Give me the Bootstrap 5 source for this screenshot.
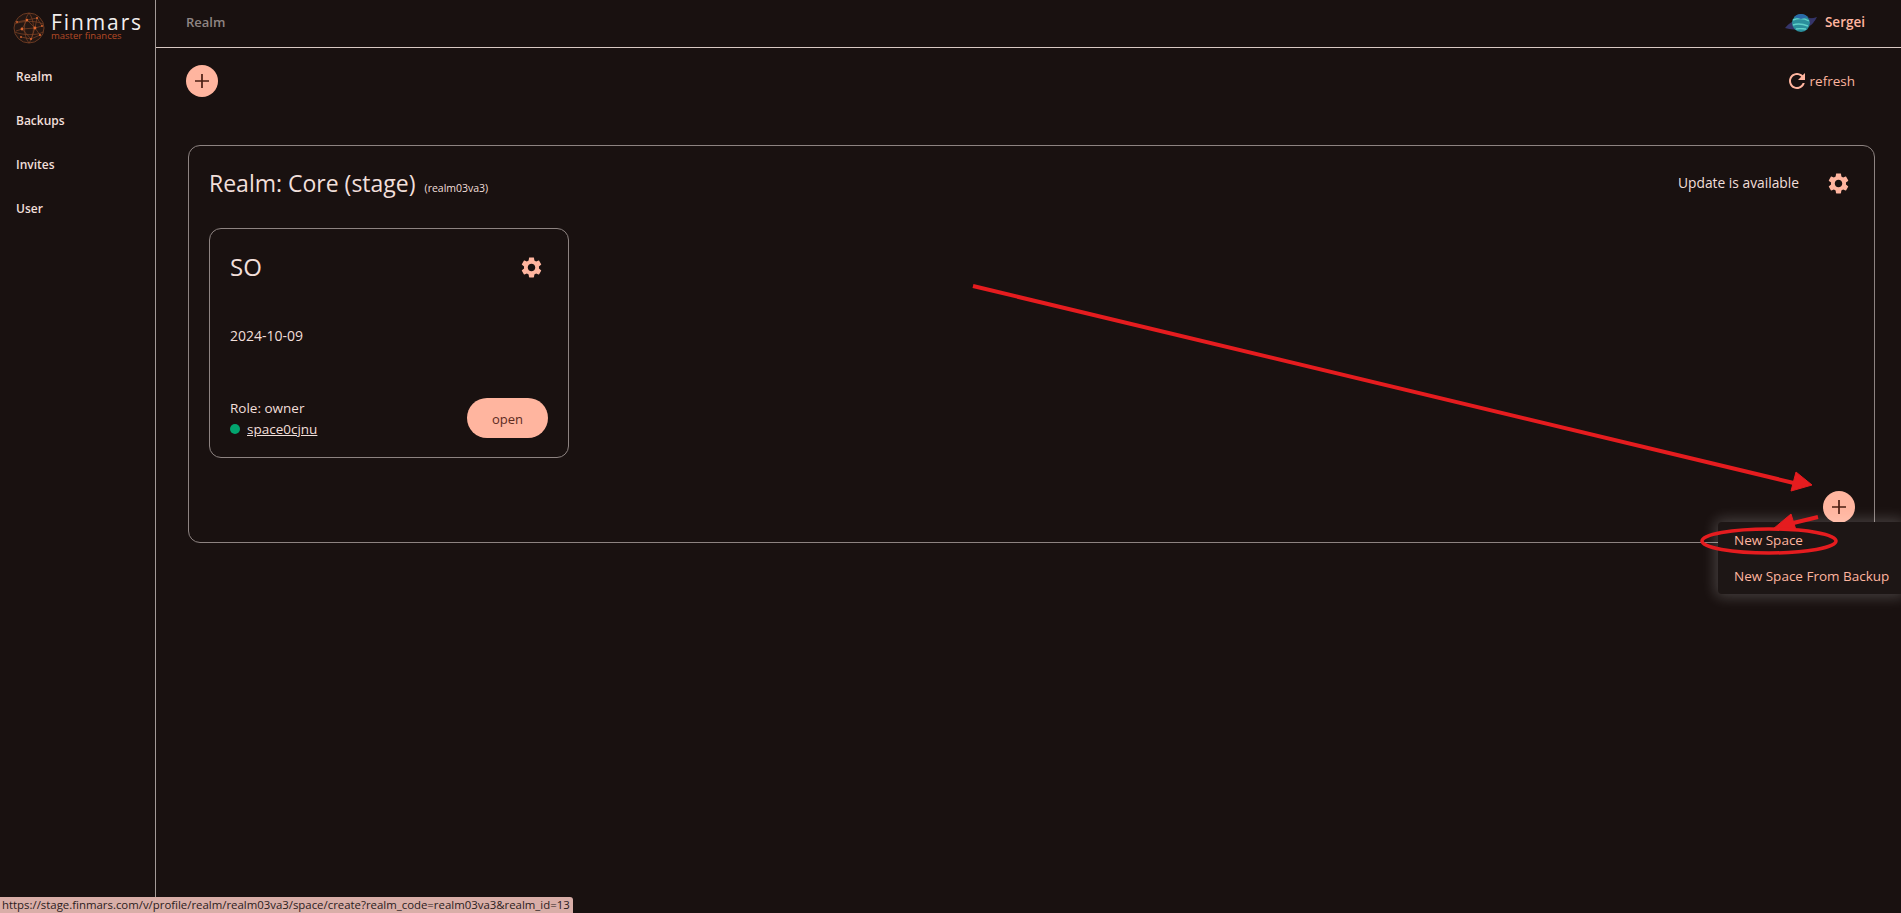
<!DOCTYPE html>
<html lang="en">
<head>
    <meta charset="UTF-8">
    <meta name="viewport" content="width=device-width, initial-scale=1">
    <title>Finmars - Realm</title>
    <link href="https://cdn.jsdelivr.net/npm/bootstrap@5.3.2/dist/css/bootstrap.min.css" rel="stylesheet">
    <style>
        html, body { height: 100%; }
        body {
            background: #191110;
            color: #f1dfda;
            font-family: "Open Sans", "Noto Sans", "Liberation Sans", sans-serif;
            font-size: 13px;
            overflow: hidden;
        }
        /* sidebar */
        .side-bar { width: 156px; height: 913px; border-right: 1px solid #a39a97; }
        .logo-row { height: 47px; padding: 12px 0 0 13px; gap: 6px; }
        .logo-name { font-size: 21px; line-height: 20px; letter-spacing: 1.9px; color: #f2eeed; }
        .logo-sub { font-size: 9.5px; line-height: 8px; color: #b44a26; }
        .side-link { display: block; height: 44px; line-height: 44px; padding-left: 16px; color: #f1dfda; font-size: 12px; font-weight: 600; text-decoration: none; }
        .side-list { padding-top: 8px; }
        /* top bar */
        .top-bar { height: 48px; border-bottom: 1px solid #d8c8c3; padding: 0 36px 2px 30px; }
        .top-title { color: #8f8583; font-weight: 600; font-size: 13px; }
        .user-name { color: #ffb59f; font-weight: 600; font-size: 13.5px; }
        .tool-row { height: 97px; padding: 17px 46px 0 30px; }
        .round-btn {
            width: 32px; height: 32px; padding: 0; border: 0;
            background: #ffb59f;
            display: flex; align-items: center; justify-content: center;
        }
        .refresh-link { color: #ffb59f; font-size: 13.5px; text-decoration: none; margin-top: 6px; gap: 3px; }
        /* realm card */
        .realm-box {
            position: relative;
            margin: 0 26px 0 32px;
            height: 398px;
            background: transparent;
            border: 1px solid #8d8381;
            border-radius: 12px;
            padding: 20px 23px 20px 20px;
            color: #f1dfda;
        }
        .realm-title { font-size: 23px; line-height: 34px; font-weight: 400; margin: 0; }
        .realm-code { font-size: 10.5px; line-height: 1; margin-left: 9px; }
        .update-text { font-size: 13.8px; margin-right: 27px; }
        .space-box {
            width: 360px; height: 230px;
            margin-top: 28px;
            background: transparent;
            border: 1px solid #8d8381;
            border-radius: 12px;
            padding: 20px 20px 19px 20px;
            color: #f1dfda;
        }
        .space-name { font-size: 24px; line-height: 36px; margin: 0; }
        .space-date { margin-top: 42px; font-size: 14px; line-height: 18px; }
        .space-role { font-size: 13.5px; line-height: 18px; margin-bottom: 3px; }
        .status-row { line-height: 18px; }
        .status-dot { width: 10px; height: 10px; background: #02a56f; margin-right: 7px; }
        .space-link { color: #f1dfda; font-size: 13.5px; }
        .open-btn {
            width: 81px; height: 40px; padding: 3px 0 0;
            border: 0; border-radius: 20px;
            background: #ffb59f; color: #5c2b1e; font-size: 13px;
        }
        /* bottom right add button and its menu */
        .add-space { position: absolute; right: 19px; bottom: 19px; }
        .add-menu {
            position: absolute; left: 1718px; top: 522px; width: 183px; height: 72px;
            background: #1d1615;
            border-radius: 4px 0 0 4px;
            box-shadow: 0 0 14px 3px rgba(255, 255, 255, .2);
        }
        .add-menu a { display: block; height: 36px; line-height: 36px; padding-left: 16px; font-size: 13.5px; color: #ffb59f; text-decoration: none; white-space: nowrap; }
        .arrow-layer { position: absolute; left: 0; top: 0; pointer-events: none; }
        .status-tip {
            position: absolute; left: 0; bottom: 0; width: 573px; height: 16px;
            background: #d9aea8; color: #2b2020;
            border-top-right-radius: 3px;
            font-family: "Open Sans", "Liberation Sans", sans-serif;
            font-size: 11.4px; line-height: 16px; padding-left: 2px; white-space: nowrap; overflow: hidden;
        }
    </style>
</head>
<body>

<div class="d-flex">
    <div class="side-bar flex-shrink-0">
        <div class="logo-row d-flex">
            <svg width="32" height="32" viewBox="0 0 32 32" class="flex-shrink-0">
                <circle cx="16" cy="16" r="15" fill="#241713" stroke="#6b3a22" stroke-width="1"/>
                <g stroke="#8f4a28" stroke-width=".6" fill="none">
                    <path d="M2 12 C8 9 22 8 30 12 M2 20 C8 23 24 24 30 20 M16 1 C10 8 10 24 16 31 M16 1 C22 8 22 24 16 31"/>
                    <path d="M4 10 L14 8 L24 6 L29 14 L22 16 L14 8 M14 8 L9 17 L22 16 L18 27 L9 17 L3 19 M22 16 L27 23 L18 27 L8 25 M24 6 L22 16"/>
                </g>
                <g fill="#e0672f">
                    <circle cx="14" cy="8" r="1.2"/><circle cx="9" cy="17" r="1.4"/><circle cx="22" cy="16" r="1.4"/>
                    <circle cx="18" cy="27" r="1"/><circle cx="24" cy="6" r="1"/><circle cx="27" cy="23" r="1"/>
                    <circle cx="4" cy="10" r=".9"/><circle cx="8" cy="25" r=".9"/><circle cx="29" cy="14" r=".9"/>
                </g>
            </svg>
            <div>
                <div class="logo-name">Finmars</div>
                <div class="logo-sub">master finances</div>
            </div>
        </div>
        <div class="side-list">
            <a class="side-link" href="#">Realm</a>
            <a class="side-link" href="#">Backups</a>
            <a class="side-link" href="#">Invites</a>
            <a class="side-link" href="#">User</a>
        </div>
    </div>

    <div class="flex-grow-1">
        <div class="top-bar d-flex align-items-center justify-content-between">
            <span class="top-title">Realm</span>
            <div class="d-flex align-items-center gap-2">
                <svg width="32" height="20" viewBox="0 0 32 20">
                    <path d="M0 15 C4 10 8 8 12 7 L20 5 C25 6 29 5 32 4 C30 8 27 12 22 14 L12 16 C8 17 4 16 0 15 Z" fill="#35356a"/>
                    <circle cx="16" cy="10" r="9" fill="#2b8f9c"/>
                    <path d="M8 7 C13 5 19 5 24 8 M8 12 C13 10 18 11 23 13 M11 16 C15 15 18 16 21 16" stroke="#5fd0c8" stroke-width="1.4" fill="none"/>
                    <path d="M9 4 C13 0 19 0 23 4 L16 6 Z" fill="#2a6aa8"/>
                    <path d="M22 4 C25 6 26 10 24 13 C27 12 29 9 30 6 C27 6 25 5 22 4 Z" fill="#35356a"/>
                </svg>
                <span class="user-name">Sergei</span>
            </div>
        </div>

        <div class="tool-row d-flex align-items-start justify-content-between">
            <button class="round-btn rounded-circle" type="button" aria-label="Add">
                <svg width="18" height="18" viewBox="0 0 18 18"><path d="M9 2 V16 M2 9 H16" stroke="#4a1e12" stroke-width="1.7"/></svg>
            </button>
            <a class="refresh-link d-flex align-items-center" href="#">
                <svg width="20" height="20" viewBox="2 2 20 20"><path fill="#ffb59f" d="M17.65 6.35C16.2 4.9 14.21 4 12 4c-4.42 0-7.99 3.58-7.99 8s3.57 8 7.99 8c3.73 0 6.84-2.55 7.73-6h-2.08c-.82 2.33-3.04 4-5.65 4-3.31 0-6-2.69-6-6s2.69-6 6-6c1.66 0 3.14.69 4.22 1.78L13 11h7V4l-2.35 2.35z"/></svg>
                refresh
            </a>
        </div>

        <div class="card realm-box">
            <div class="d-flex align-items-center justify-content-between">
                <h1 class="realm-title">Realm: Core (stage)<span class="realm-code">(realm03va3)</span></h1>
                <div class="d-flex align-items-center">
                    <span class="update-text">Update is available</span>
                    <svg width="25" height="25" viewBox="0 0 24 24"><path fill="#ffb59f" d="M19.14 12.94c.04-.3.06-.61.06-.94 0-.32-.02-.64-.07-.94l2.03-1.58c.18-.14.23-.41.12-.61l-1.92-3.32c-.12-.22-.37-.29-.59-.22l-2.39.96c-.5-.38-1.03-.7-1.62-.94l-.36-2.54c-.04-.24-.24-.41-.48-.41h-3.84c-.24 0-.43.17-.47.41l-.36 2.54c-.59.24-1.13.57-1.62.94l-2.39-.96c-.22-.08-.47 0-.59.22L2.74 8.87c-.12.21-.08.47.12.61l2.03 1.58c-.05.3-.09.63-.09.94s.02.64.07.94l-2.03 1.58c-.18.14-.23.41-.12.61l1.92 3.32c.12.22.37.29.59.22l2.39-.96c.5.38 1.03.7 1.62.94l.36 2.54c.05.24.24.41.48.41h3.84c.24 0 .44-.17.47-.41l.36-2.54c.59-.24 1.13-.56 1.62-.94l2.39.96c.22.08.47 0 .59-.22l1.92-3.32c.12-.22.07-.47-.12-.61l-2.01-1.58zM12 15.6c-1.98 0-3.6-1.62-3.6-3.6s1.62-3.6 3.6-3.6 3.6 1.62 3.6 3.6-1.62 3.6-3.6 3.6z"/></svg>
                </div>
            </div>

            <div class="card space-box">
                <div class="d-flex align-items-center justify-content-between">
                    <h2 class="space-name">SO</h2>
                    <svg class="me-1" width="25" height="25" viewBox="0 0 24 24"><path fill="#ffb59f" d="M19.14 12.94c.04-.3.06-.61.06-.94 0-.32-.02-.64-.07-.94l2.03-1.58c.18-.14.23-.41.12-.61l-1.92-3.32c-.12-.22-.37-.29-.59-.22l-2.39.96c-.5-.38-1.03-.7-1.62-.94l-.36-2.54c-.04-.24-.24-.41-.48-.41h-3.84c-.24 0-.43.17-.47.41l-.36 2.54c-.59.24-1.13.57-1.62.94l-2.39-.96c-.22-.08-.47 0-.59.22L2.74 8.87c-.12.21-.08.47.12.61l2.03 1.58c-.05.3-.09.63-.09.94s.02.64.07.94l-2.03 1.58c-.18.14-.23.41-.12.61l1.92 3.32c.12.22.37.29.59.22l2.39-.96c.5.38 1.03.7 1.62.94l.36 2.54c.05.24.24.41.48.41h3.84c.24 0 .44-.17.47-.41l.36-2.54c.59-.24 1.13-.56 1.62-.94l2.39.96c.22.08.47 0 .59-.22l1.92-3.32c.12-.22.07-.47-.12-.61l-2.01-1.58zM12 15.6c-1.98 0-3.6-1.62-3.6-3.6s1.62-3.6 3.6-3.6 3.6 1.62 3.6 3.6-1.62 3.6-3.6 3.6z"/></svg>
                </div>
                <div class="space-date">2024-10-09</div>
                <div class="d-flex align-items-end justify-content-between mt-auto">
                    <div>
                        <div class="space-role">Role: owner</div>
                        <div class="status-row d-flex align-items-center">
                            <span class="status-dot rounded-circle d-inline-block"></span>
                            <a class="space-link" href="#">space0cjnu</a>
                        </div>
                    </div>
                    <button class="open-btn" type="button">open</button>
                </div>
            </div>

            <button class="round-btn rounded-circle add-space" type="button" aria-label="Add space">
                <svg width="18" height="18" viewBox="0 0 18 18"><path d="M9 2 V16 M2 9 H16" stroke="#4a1e12" stroke-width="1.7"/></svg>
            </button>
        </div>
    </div>
</div>

<div class="add-menu">
    <a href="#">New Space</a>
    <a href="#">New Space From Backup</a>
</div>

<!-- red annotation arrows drawn on the screenshot -->
<svg class="arrow-layer" width="1901" height="913" viewBox="0 0 1901 913">
    <path d="M973 286 L1798 484" stroke="#e51c1f" stroke-width="4" fill="none"/>
    <path d="M1796 472 L1812 485 L1791 491 Z" fill="#e51c1f" stroke="#e51c1f" stroke-width="1"/>
    <path d="M1818 517 L1785 525" stroke="#e51c1f" stroke-width="4" fill="none"/>
    <path d="M1791 514 L1773 529 L1796 530 Z" fill="#e51c1f" stroke="#e51c1f" stroke-width="1"/>
    <ellipse cx="1769" cy="541" rx="67" ry="12" stroke="#e51c1f" stroke-width="3.5" fill="none"/>
</svg>

<div class="status-tip">https://stage.finmars.com/v/profile/realm/realm03va3/space/create?realm_code=realm03va3&amp;realm_id=13</div>

<script src="https://cdn.jsdelivr.net/npm/bootstrap@5.3.2/dist/js/bootstrap.bundle.min.js"></script>
</body>
</html>
